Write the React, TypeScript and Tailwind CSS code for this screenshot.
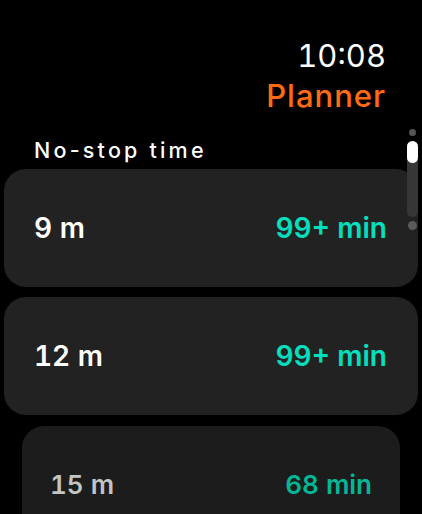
import React from 'react';

interface StopRow {
  depth: string;
  time: string;
  dim?: boolean;
}

const rows: StopRow[] = [
  { depth: '9 m', time: '99+ min' },
  { depth: '12 m', time: '99+ min' },
  { depth: '15 m', time: '68 min', dim: true },
];

function StopCard({ row }: { row: StopRow }) {
  if (row.dim) {
    return (
      <div className="ml-[22px] mt-[1px] flex h-[118px] w-[378px] shrink-0 items-center justify-between rounded-[22px] bg-[#1c1c1c] px-[28px] tabular-nums">
        <span className="text-[26px] font-semibold leading-none text-[#c4c4c4]">{row.depth}</span>
        <span className="text-[26px] font-semibold leading-none text-[#00b898]">{row.time}</span>
      </div>
    );
  }

  return (
    <div className="mx-[4px] flex h-[118px] shrink-0 items-center justify-between rounded-[22px] bg-[#222222] pl-[30px] pr-[31px] tabular-nums">
      <span className="text-[28px] font-semibold leading-none text-white">{row.depth}</span>
      <span className="text-[28px] font-semibold leading-none text-[#00e0bf]">{row.time}</span>
    </div>
  );
}

export default function App() {
  return (
    <div
      className="relative flex h-[514px] w-[422px] flex-col overflow-hidden bg-black"
      style={{ fontFamily: 'Inter, "Noto Sans", sans-serif' }}
    >
      {/* ヘッダー: 時刻とタイトル */}
      <div className="flex flex-col items-end pr-[36px] pt-[36px]">
        <span className="text-[31px] leading-[40px] text-white tabular-nums">10:08</span>
        <span className="text-[31px] font-medium leading-[40px] tracking-[1px] text-[#ff6b12]">Planner</span>
      </div>

      <div className="mt-[23px] pl-[34px] text-[21.5px] font-medium leading-[22px] tracking-[3.2px] text-white">
        No-stop time
      </div>

      <div className="mt-[8px] flex flex-col gap-[10px]">
        {rows.map((row) => (
          <StopCard key={row.depth} row={row} />
        ))}
      </div>

      {/* スクロールインジケーター */}
      <div className="absolute left-[406px] top-[129px] flex w-[12px] flex-col items-center">
        <div className="h-[7px] w-[7px] rounded-full bg-[#555555]" />
        <div className="mt-[5px] h-[76px] w-[11px] rounded-full bg-[#363636]">
          <div className="h-[22px] w-[11px] rounded-full bg-white" />
        </div>
        <div className="mt-[4px] h-[9px] w-[9px] rounded-full bg-[#5a5a5a]" />
      </div>
    </div>
  );
}
